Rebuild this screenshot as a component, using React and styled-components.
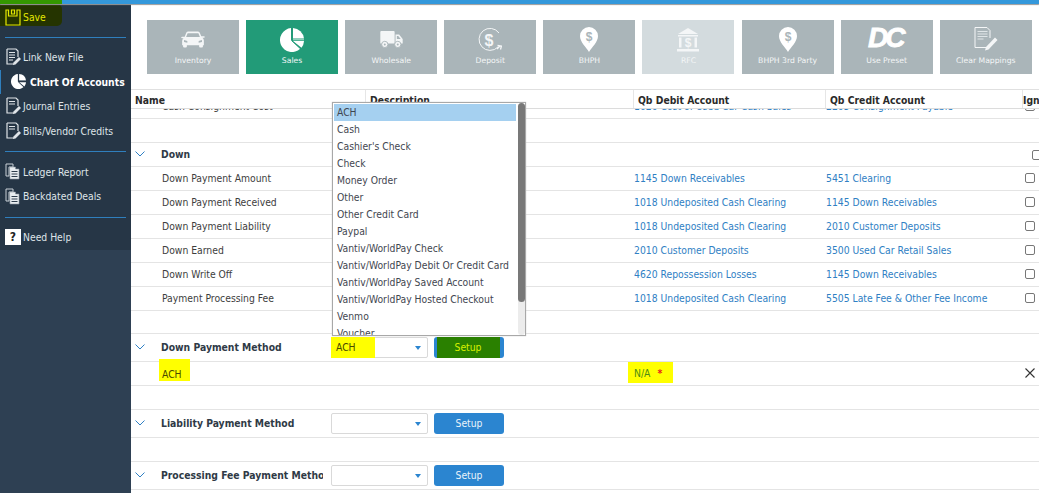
import React from 'react';
import styled, { createGlobalStyle } from 'styled-components';

const GlobalStyle = createGlobalStyle`
  html, body {
    margin: 0;
    padding: 0;
    background: #fff;
    overflow: hidden;
  }
  * { box-sizing: border-box; }
  body {
    font-family: "DejaVu Sans Condensed", "DejaVu Sans", Verdana, sans-serif;
    font-size: 10.3px;
    color: #333;
  }
`;

const Page = styled.div`
  width: 1039px;
  height: 493px;
  display: flex;
  flex-direction: column;
  overflow: hidden;
`;

const TopBar = styled.div`
  height: 4px;
  flex: none;
  background: #3498db;
  box-shadow: 0 1px 1px #999;
  position: relative;
  z-index: 2;
`;

const TopBarMark = styled.div`
  width: 62px;
  height: 100%;
  background: #349800;
`;

const Body = styled.div`
  flex: 1;
  display: flex;
  min-height: 0;
`;

const Sidebar = styled.nav`
  width: 131px;
  flex: none;
  background: #2e4053;
`;

const SidebarInner = styled.div`
  height: 246px;
  background: #263646;
`;

const SaveRow = styled.div`
  width: 62px;
  height: 22px;
  padding: 4px 0 0 5px;
  display: flex;
  align-items: center;
  gap: 2px;
  color: #e4e800;
  background: #253400;
  border-radius: 0 5px 5px 0;
`;

const Divider = styled.div`
  height: 1px;
  margin: ${(p) => p.$top}px 5px 7px;
  background: #2f7fbd;
`;

const NavItem = styled.div`
  height: 24.6px;
  display: flex;
  align-items: center;
  gap: ${(p) => (p.$active ? 4 : 2)}px;
  padding-left: ${(p) => (p.$active ? 11 : 5)}px;
  color: ${(p) => (p.$active ? '#fff' : '#dfe4e8')};
  font-weight: ${(p) => (p.$active ? 700 : 400)};
  white-space: nowrap;
  box-shadow: ${(p) => (p.$active ? 'inset 1px 0 0 #2f7fbd' : 'none')};
`;

const HelpBox = styled.span`
  width: 16px;
  height: 16px;
  background: #fff;
  color: #222;
  font-weight: 700;
  font-size: 12px;
  display: flex;
  align-items: center;
  justify-content: center;
`;

const Main = styled.main`
  flex: 1;
  min-width: 0;
  position: relative;
  background: #fff;
  display: flex;
  flex-direction: column;
`;

const Tiles = styled.div`
  display: flex;
  gap: 7.1px;
  padding: 16px 0 15px 16px;
`;

const Tile = styled.div`
  width: 92px;
  height: 54px;
  flex: none;
  background: ${(p) => (p.$active ? '#229b78' : p.$disabled ? '#d3dbde' : '#aab5b9')};
  color: #f4f6f7;
  display: flex;
  flex-direction: column;
  align-items: center;
  font-family: "DejaVu Sans", Verdana, sans-serif;
  font-size: 7.7px;
`;

const TileIcon = styled.div`
  height: 33px;
  width: 100%;
  flex: none;
  display: flex;
  align-items: center;
  justify-content: center;
  padding-top: 6px;
`;

const TileLabel = styled.span`
  margin-top: 2px;
  line-height: 12px;
  white-space: nowrap;
`;

const DcMark = styled.span`
  font-family: "Liberation Sans", Arial, sans-serif;
  font-weight: 700;
  font-style: italic;
  font-size: 28px;
  line-height: 24px;
  letter-spacing: -3px;
  color: #fff;
  padding-right: 3px;
  margin-top: -4px;
  -webkit-text-stroke: 0.8px #fff;
`;

const Columns = `
  display: grid;
  grid-template-columns: 235px 268px 192px 197px 1fr;
`;

const HeaderRow = styled.div`
  ${Columns}
  height: 20px;
  flex: none;
  background: #fff;
  border-top: 1px solid #e0e0e0;
  border-bottom: 1px solid #dcdcdc;
  position: relative;
  z-index: 1;
`;

const HeaderCell = styled.div`
  padding-left: ${(p) => (p.$flush ? 0 : 4)}px;
  line-height: 21px;
  font-weight: 700;
  color: #2a2a2a;
  white-space: nowrap;
  overflow: hidden;
  border-right: ${(p) => (p.$flush ? 'none' : '1px solid #e6e6e6')};
`;

const TableBody = styled.div`
  flex: 1;
  min-height: 0;
  overflow: hidden;
`;

const TableInner = styled.div`
  margin-top: -14px;
`;

const Row = styled.div`
  ${Columns}
  height: ${(p) => p.$h || 24}px;
  padding-bottom: 2px;
  align-items: center;
  border-bottom: 1px solid #e4e4e4;
`;

const NameCell = styled.div`
  padding-left: 31px;
  color: #3d3d3d;
  white-space: nowrap;
`;

const AccountCell = styled.div`
  color: #2f80c4;
  white-space: nowrap;
`;

const CheckCell = styled.div`
  padding-left: 2px;
  overflow: hidden;
`;

const Check = styled.span`
  display: block;
  width: 10px;
  height: 10px;
  border: 1px solid #777;
  border-radius: 2px;
  background: #fff;
`;

const Chevron = styled.svg`
  width: 10px;
  height: 6px;
  flex: none;
  margin-bottom: 2px;
  fill: none;
  stroke: #2f80c4;
  stroke-width: 1;
`;

const GroupRow = styled.div`
  height: ${(p) => p.$h || 28}px;
  display: flex;
  align-items: center;
  padding-left: 4px;
  border-bottom: 1px solid #e4e4e4;
`;

const GroupName = styled.div`
  width: 162px;
  margin: 0 8px 2px 16px;
  flex: none;
  overflow: hidden;
  white-space: nowrap;
  font-weight: 700;
  color: #2f3a46;
`;

const GroupCheck = styled.div`
  margin-left: auto;
  width: 7px;
  overflow: hidden;
`;

const Select = styled.div`
  width: 97px;
  height: 21px;
  flex: none;
  border: 1px solid #d9d9d9;
  border-radius: 2px;
  background: #fff;
  display: flex;
  align-items: stretch;
  position: relative;
`;

const SelectValue = styled.span`
  width: 44px;
  margin: -1px 0 -1px -1px;
  padding-left: 5px;
  background: #ffff00;
  color: #4a4a00;
  line-height: 21px;
`;

const Caret = styled.span`
  position: absolute;
  right: 6px;
  top: 8px;
  border-left: 3.5px solid transparent;
  border-right: 3.5px solid transparent;
  border-top: 4px solid #2b85d0;
`;

const SetupButton = styled.button`
  width: 70px;
  height: 21px;
  flex: none;
  margin-left: 6px;
  padding: 0;
  border: none;
  border-radius: 3px;
  background: #2b85d0;
  color: #eaf3fa;
  font: inherit;
  line-height: 21px;
  display: flex;
  justify-content: center;
`;

const SetupMarked = styled.span`
  width: 63px;
  margin-right: 2px;
  background: #2a8000;
  color: #d8f000;
`;

const MarkedName = styled.div`
  align-self: start;
  justify-self: start;
  width: 31px;
  height: 22px;
  margin: -3px 0 0 28px;
  padding: 9px 3px 0;
  background: #ffff00;
  color: #4a4a00;
  line-height: 12px;
`;

const MarkedAccount = styled.div`
  align-self: start;
  justify-self: start;
  width: 45px;
  height: 21px;
  margin-left: -6px;
  padding: 5px 0 0 6px;
  background: #ffff00;
  color: #4c8c14;
  line-height: 12px;
  white-space: nowrap;
`;

const Required = styled.span`
  margin-left: 7px;
  color: #e8201c;
  font-weight: 700;
`;

const CloseCell = styled.div`
  padding-left: 2px;
  display: flex;
`;

const Menu = styled.div`
  position: absolute;
  left: 201px;
  top: 98px;
  width: 194px;
  height: 234px;
  z-index: 3;
  background: #fff;
  border: 1px solid #a8a8a8;
  padding: 1px 0 0 1px;
  display: flex;
  box-shadow: 0 0 1px #bbb;
`;

const MenuList = styled.div`
  width: 182px;
  flex: none;
  overflow: hidden;
`;

const MenuItem = styled.div`
  height: 17px;
  line-height: 17px;
  padding-left: 3px;
  white-space: nowrap;
  color: #3f4650;
  background: ${(p) => (p.$selected ? '#a5d0f0' : 'transparent')};
`;

const ScrollTrack = styled.div`
  width: 8px;
  margin: -1px 0 0 2px;
  height: 232px;
  background: #ececec;
  border-radius: 4px;
`;

const ScrollThumb = styled.div`
  height: 199px;
  background: #787878;
  border-radius: 4px;
`;

const SaveIcon = () => (
  <svg width="16" height="17" viewBox="0 0 16 17" fill="none" stroke="currentColor" strokeWidth="1.2">
    <path d="M1 1h2.500v6h8.500V1h3v15H1z" />
    <path d="M6.500 1v4h3V1z" />
  </svg>
);

const DocIcon = ({ short }) => (
  <svg width="16" height="18" viewBox="0 0 16 18" fill="none" stroke="#dfe4e8" strokeWidth="1.200">
    <path d="M2 1h9l2 2v6M9 16H2V1" />
    <path d={short ? 'M4 4.500h6M4 7h6' : 'M4 4.500h6M4 7h6M4 9.500h6M4 12h4'} strokeWidth="1" />
    <path d="M8 17l.5-2.500L14 9l2 2-5.500 5.500z" fill="#dfe4e8" stroke="none" />
  </svg>
);

const StackIcon = () => (
  <svg width="16" height="17" viewBox="0 0 16 17">
    <path d="M1 1h7v3H4v9H1z" fill="none" stroke="#c9d0d6" strokeWidth="1" />
    <path d="M4.500 4h6v2H14v10H5z" fill="#e9edf0" stroke="#8f99a3" strokeWidth=".6" />
    <path d="M6.500 8.500h6M6.500 11h6M6.500 13.500h6" stroke="#2e3d4c" strokeWidth="1" />
  </svg>
);

const PieIcon = ({ size = 24, gap = '#229b78', line = '#8fd3bc' }) => (
  <svg width={size} height={size} viewBox="0 0 24 24">
    <path d="M11 0.100A12 12 0 1 0 20.200 20.800L11 12z" fill="#fff" />
    <path d="M13 0A12 12 0 0 1 24 10.500H13z" fill="#fff" />
    <path d="M13 13H24A12 12 0 0 1 21.500 19.800z" fill="#fff" />
    <path d="M13 11.700H24" stroke={line} strokeWidth="1.500" />
    <path d="M11.500 12.500L20.800 21" stroke={gap} strokeWidth="1" />
  </svg>
);

const CarIcon = () => (
  <svg width="24" height="17" viewBox="0 0 25 18" fill="#f4f6f7">
    <path d="M5.500 1.500Q6 .5 7.500.5h10q1.500 0 2 1l1.800 4H24q1 0 1 .8t-1 .8h-1.500q1.500 1 1.500 3V15h-1v1.500q0 1-1 1h-2q-1 0-1-1V15H6v1.500q0 1-1 1H3q-1 0-1-1V15H1v-4.400q0-2 1.500-3H1q-1 0-1-.8t1-.8h2.700zM6.800 2.500 5.200 6.300h14.600l-1.600-3.800zM3 9.500v2.200l3.500.8V10.500zM22 9.500v2.200l-3.500.8V10.500z" fillRule="evenodd" />
  </svg>
);

const TruckIcon = () => (
  <svg width="25" height="17" viewBox="0 0 25 19" fill="#f4f6f7">
    <rect x="0" y="0" width="16" height="14" rx="1" />
    <path d="M17 4h4l4 5v5h-8zM18.500 5.500v3.500h4.300l-2.800-3.500z" fillRule="evenodd" />
    <circle cx="5" cy="15" r="3.500" stroke="#aab5b9" strokeWidth="1" />
    <circle cx="5" cy="15" r="1.100" fill="#aab5b9" />
    <circle cx="19.500" cy="15" r="3.500" stroke="#aab5b9" strokeWidth="1" />
    <circle cx="19.500" cy="15" r="1.100" fill="#aab5b9" />
  </svg>
);

const DepositIcon = () => (
  <svg width="24" height="24" viewBox="0 0 24 24" fill="none" stroke="#f4f6f7" strokeWidth="1">
    <path d="M20 19A11 11 0 1 1 21 5" />
    <path d="M19.500 17.500l4 .5-1 3.500M22 18l-3 3" strokeWidth="1.300" />
    <text x="11" y="17.500" textAnchor="middle" fontSize="16" fontWeight="700" fill="#f4f6f7" stroke="none" fontFamily="Liberation Sans, sans-serif">$</text>
  </svg>
);

const PinIcon = ({ bg = '#aab5b9' }) => (
  <svg width="18" height="25" viewBox="0 0 18 25">
    <path d="M9 0a9 9 0 0 1 9 9c0 6-6 11-9 16C6 20 0 15 0 9a9 9 0 0 1 9-9z" fill="#fff" />
    <text x="9" y="13.500" textAnchor="middle" fontSize="12" fontWeight="700" fill={bg} fontFamily="Liberation Sans, sans-serif">$</text>
  </svg>
);

const BankIcon = () => (
  <svg width="22" height="24" viewBox="0 0 22 24" fill="#f4f6f7">
    <path d="M11 0L21 6H1z" />
    <rect x="1" y="7" width="20" height="1.500" />
    <rect x="2" y="9.500" width="2.500" height="10" />
    <rect x="17.500" y="9.500" width="2.500" height="10" />
    <rect x="0" y="21" width="22" height="2.500" />
    <text x="11" y="18.500" textAnchor="middle" fontSize="12" fontWeight="700" fontFamily="Liberation Sans, sans-serif">$</text>
  </svg>
);

const ClearIcon = () => (
  <svg width="24" height="25" viewBox="0 0 24 25" fill="none" stroke="#f4f6f7">
    <path d="M1 .5h12l3 3V11M12 20.500H1V.5" strokeWidth="1" />
    <path d="M3.500 4.500h10M3.500 7h10M3.500 9.500h10M3.500 12h6" stroke="#dfe5e7" strokeWidth="1.200" />
    <path d="M12 20l9-9.500 2.500 2.500-9 9.500-3.500 1z" fill="#f4f6f7" stroke="none" />
  </svg>
);

const Arrow = () => (
  <Chevron viewBox="0 0 10 6">
    <path d="M.5 .5L5 5 9.500 .5" />
  </Chevron>
);

const CloseIcon = () => (
  <svg width="10" height="10" viewBox="0 0 10 10" stroke="#333" strokeWidth="1.100">
    <path d="M.5 .5l9 9M9.500 .5l-9 9" />
  </svg>
);

const tiles = [
  { label: 'Inventory', icon: <CarIcon /> },
  { label: 'Sales', icon: <PieIcon />, active: true },
  { label: 'Wholesale', icon: <TruckIcon /> },
  { label: 'Deposit', icon: <DepositIcon /> },
  { label: 'BHPH', icon: <PinIcon /> },
  { label: 'RFC', icon: <BankIcon />, disabled: true },
  { label: 'BHPH 3rd Party', icon: <PinIcon /> },
  { label: 'Use Preset', icon: <DcMark>DC</DcMark> },
  { label: 'Clear Mappings', icon: <ClearIcon /> },
];

const downRows = [
  ['Down Payment Amount', '1145 Down Receivables', '5451 Clearing'],
  ['Down Payment Received', '1018 Undeposited Cash Clearing', '1145 Down Receivables'],
  ['Down Payment Liability', '1018 Undeposited Cash Clearing', '2010 Customer Deposits'],
  ['Down Earned', '2010 Customer Deposits', '3500 Used Car Retail Sales'],
  ['Down Write Off', '4620 Repossession Losses', '1145 Down Receivables'],
  ['Payment Processing Fee', '1018 Undeposited Cash Clearing', '5505 Late Fee & Other Fee Income'],
];

const methods = [
  'ACH',
  'Cash',
  "Cashier's Check",
  'Check',
  'Money Order',
  'Other',
  'Other Credit Card',
  'Paypal',
  'Vantiv/WorldPay Check',
  'Vantiv/WorldPay Debit Or Credit Card',
  'Vantiv/WorldPay Saved Account',
  'Vantiv/WorldPay Hosted Checkout',
  'Venmo',
  'Voucher',
];

export default function App() {
  return (
    <Page>
      <GlobalStyle />
      <TopBar>
        <TopBarMark />
      </TopBar>
      <Body>
        <Sidebar>
          <SidebarInner>
            <SaveRow>
              <SaveIcon />
              Save
            </SaveRow>
            <Divider $top={11} />
            <NavItem><DocIcon />Link New File</NavItem>
            <NavItem $active><PieIcon size={15} gap="#263646" line="#263646" />Chart Of Accounts</NavItem>
            <NavItem><DocIcon short />Journal Entries</NavItem>
            <NavItem><DocIcon short />Bills/Vendor Credits</NavItem>
            <Divider $top={8} />
            <NavItem><StackIcon />Ledger Report</NavItem>
            <NavItem><StackIcon />Backdated Deals</NavItem>
            <Divider $top={8} />
            <NavItem><HelpBox>?</HelpBox>Need Help</NavItem>
          </SidebarInner>
        </Sidebar>
        <Main>
          <Tiles>
            {tiles.map((t) => (
              <Tile key={t.label} $active={t.active} $disabled={t.disabled}>
                <TileIcon>{t.icon}</TileIcon>
                <TileLabel>{t.label}</TileLabel>
              </Tile>
            ))}
          </Tiles>
          <HeaderRow>
            <HeaderCell>Name</HeaderCell>
            <HeaderCell>Description</HeaderCell>
            <HeaderCell>Qb Debit Account</HeaderCell>
            <HeaderCell>Qb Credit Account</HeaderCell>
            <HeaderCell $flush>Ignore</HeaderCell>
          </HeaderRow>
          <TableBody>
            <TableInner>
              <Row>
                <NameCell>Cash Consignment Cost</NameCell>
                <div />
                <AccountCell>1020 Cost of Used Car Cash Sales</AccountCell>
                <AccountCell>2205 Consignment Payable</AccountCell>
                <CheckCell><Check /></CheckCell>
              </Row>
              <GroupRow $h={24} />
              <GroupRow $h={24}>
                <Arrow />
                <GroupName>Down</GroupName>
                <GroupCheck><Check /></GroupCheck>
              </GroupRow>
              {downRows.map(([name, debit, credit]) => (
                <Row key={name}>
                  <NameCell>{name}</NameCell>
                  <div />
                  <AccountCell>{debit}</AccountCell>
                  <AccountCell>{credit}</AccountCell>
                  <CheckCell><Check /></CheckCell>
                </Row>
              ))}
              <GroupRow $h={23} />
              <GroupRow>
                <Arrow />
                <GroupName>Down Payment Method</GroupName>
                <Select>
                  <SelectValue>ACH</SelectValue>
                  <Caret />
                </Select>
                <SetupButton><SetupMarked>Setup</SetupMarked></SetupButton>
              </GroupRow>
              <Row>
                <MarkedName>ACH</MarkedName>
                <div />
                <MarkedAccount>N/A<Required>*</Required></MarkedAccount>
                <div />
                <CloseCell><CloseIcon /></CloseCell>
              </Row>
              <GroupRow $h={24} />
              <GroupRow>
                <Arrow />
                <GroupName>Liability Payment Method</GroupName>
                <Select><Caret /></Select>
                <SetupButton>Setup</SetupButton>
              </GroupRow>
              <GroupRow $h={24} />
              <GroupRow>
                <Arrow />
                <GroupName>Processing Fee Payment Method</GroupName>
                <Select><Caret /></Select>
                <SetupButton>Setup</SetupButton>
              </GroupRow>
            </TableInner>
          </TableBody>
          <Menu>
            <MenuList>
              {methods.map((m, i) => (
                <MenuItem key={m} $selected={i === 0}>{m}</MenuItem>
              ))}
            </MenuList>
            <ScrollTrack>
              <ScrollThumb />
            </ScrollTrack>
          </Menu>
        </Main>
      </Body>
    </Page>
  );
}
